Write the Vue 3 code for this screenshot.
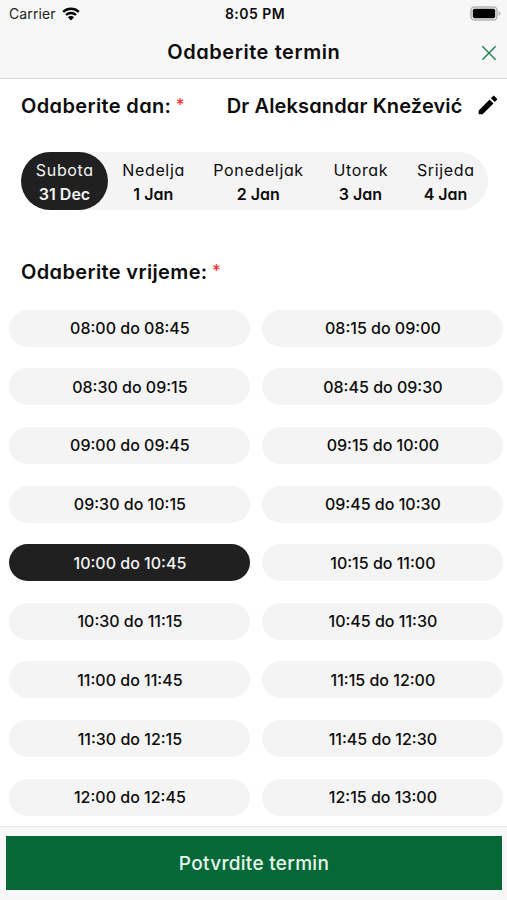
<script setup>
import { ref } from 'vue'

const days = [
  { name: 'Subota', date: '31 Dec' },
  { name: 'Nedelja', date: '1 Jan' },
  { name: 'Ponedeljak', date: '2 Jan' },
  { name: 'Utorak', date: '3 Jan' },
  { name: 'Srijeda', date: '4 Jan' },
]
const slots = [
  '08:00 do 08:45', '08:15 do 09:00',
  '08:30 do 09:15', '08:45 do 09:30',
  '09:00 do 09:45', '09:15 do 10:00',
  '09:30 do 10:15', '09:45 do 10:30',
  '10:00 do 10:45', '10:15 do 11:00',
  '10:30 do 11:15', '10:45 do 11:30',
  '11:00 do 11:45', '11:15 do 12:00',
  '11:30 do 12:15', '11:45 do 12:30',
  '12:00 do 12:45', '12:15 do 13:00',
]
const selectedDay = ref(0)
const selectedSlot = ref(8)
</script>

<template>
  <div class="screen">
    <header class="top">
      <div class="status">
        <div class="carrier">
          <span>Carrier</span>
          <svg class="wifi" width="18" height="14" viewBox="0 0 18 14">
            <path d="M1.2 4.9a11.2 11.2 0 0 1 15.6 0M4 8a7.2 7.2 0 0 1 10 0" fill="none" stroke="#000" stroke-width="2.3" />
            <path d="M9 13.5 5.9 10.3a4.4 4.4 0 0 1 6.2 0Z" fill="#000" />
          </svg>
        </div>
        <span class="clock">8:05 PM</span>
        <svg class="battery" width="31" height="15" viewBox="0 0 31 15">
          <rect x="1" y="1" width="26" height="13" rx="3.6" fill="#f7f7f7" stroke="#b4b4b4" stroke-width="1.6" />
          <rect x="2.8" y="2.7" width="22.4" height="9.6" rx="1.8" fill="#000" />
          <path d="M28.7 5v5q1.7-.7 1.7-2.5T28.7 5Z" fill="#b4b4b4" />
        </svg>
      </div>
      <div class="titlebar">
        <h1>Odaberite termin</h1>
        <button class="close" aria-label="Zatvori">
          <svg width="16" height="16" viewBox="0 0 16 16"><path d="m1.3 1.3 13.4 13.4m0-13.4L1.3 14.7" stroke="#217d50" stroke-width="1.35" /></svg>
        </button>
      </div>
    </header>

    <main>
      <div class="row">
        <h2 class="pick-day">Odaberite dan: <span class="req">*</span></h2>
        <div class="doctor">
          <h2 class="name">Dr Aleksandar Knežević</h2>
          <svg class="pencil" width="20" height="20" viewBox="0 0 20 20">
            <path d="M.7 15.4v3.9h3.9L15.5 8.4l-3.9-3.9ZM18.8 5.1c.5-.5.5-1.1 0-1.6l-2.3-2.3c-.5-.5-1.1-.5-1.6 0l-2 2 3.9 3.9Z" fill="#000" />
          </svg>
        </div>
      </div>

      <div class="days">
        <button v-for="(d, i) in days" :key="d.name" class="day" :class="{ active: i === selectedDay }" @click="selectedDay = i">
          <span>{{ d.name }}</span>
          <strong>{{ d.date }}</strong>
        </button>
      </div>

      <h2 class="pick-time">Odaberite vrijeme: <span class="req">*</span></h2>

      <div class="slots">
        <button v-for="(s, i) in slots" :key="s" class="slot" :class="{ active: i === selectedSlot }" @click="selectedSlot = i">{{ s }}</button>
      </div>
    </main>

    <footer><button class="confirm">Potvrdite termin</button></footer>
  </div>
</template>

<style>
body { margin: 0; background: #fff; overflow: hidden; }
</style>

<style scoped>
.screen {
  width: 507px;
  height: 900px;
  display: flex;
  flex-direction: column;
  overflow: hidden;
  background: #fff;
  color: #0c0c0c;
  font-family: Inter, "Open Sans", sans-serif;
  font-feature-settings: "cv11" 1;
}
button {
  border: 0;
  padding: 0;
  background: none;
  color: inherit;
  font: inherit;
  font-feature-settings: inherit;
  letter-spacing: inherit;
}
h1, h2 { margin: 0; font-weight: 600; white-space: nowrap; }
svg { display: block; flex: none; }
.top {
  box-sizing: border-box;
  flex: none;
  height: 79px;
  background: #f7f7f7;
  border-bottom: 1px solid #d9d9d9;
}
.status {
  height: 27px;
  display: grid;
  grid-template-columns: 1fr auto 1fr;
  align-items: center;
  padding: 0 6px 0 9px;
  font-feature-settings: normal;
  font-size: 14px;
}
.carrier { display: flex; align-items: center; gap: 6px; color: #222; }
.carrier span { letter-spacing: 0.1px; }
.clock { font-weight: 600; letter-spacing: 0.45px; }
.battery { justify-self: end; }
.titlebar {
  height: 51px;
  display: grid;
  grid-template-columns: 1fr auto 1fr;
  align-items: center;
  padding: 0 10.5px;
}
h1 { grid-column: 2; font-size: 20px; line-height: 24px; padding-bottom: 2px; letter-spacing: 0.57px; margin-right: -0.57px; }
.close { justify-self: end; }
main { flex: 1; min-height: 0; display: flex; flex-direction: column; }
.row {
  height: 54px;
  display: flex;
  align-items: center;
  justify-content: space-between;
  padding: 0 9px 0 21px;
}
h2 { font-size: 20px; line-height: 26px; letter-spacing: 0.36px; }
.name { letter-spacing: 0.13px; }
.pencil { margin-bottom: 2.5px; }
.req { color: #f8373a; font-size: 17px; line-height: 1; font-weight: 500; vertical-align: 2px; margin-left: -1px; }
.doctor { display: flex; align-items: center; gap: 15.5px; }
.days {
  flex: none;
  margin: 19px 19px 0 21px;
  height: 58px;
  display: grid;
  grid-template-columns: 87px 90.5px 119.5px 85px 85px;
  background: #f4f4f4;
  border-radius: 29px;
}
.day {
  display: flex;
  flex-direction: column;
  align-items: center;
  justify-content: center;
  border-radius: 29px;
  padding-top: 1px;
  font-size: 16px;
  line-height: 24px;
}
.day span { letter-spacing: 0.65px; margin-right: -0.65px; }
.day strong { font-weight: 600; }
.active { background: #202020; color: #f4f4f4; }
.pick-time { margin: 49px 0 0 21px; }
.slots {
  display: grid;
  grid-template-columns: 241px 241px;
  grid-auto-rows: 37px;
  gap: 21.65px 12px;
  margin: 24.6px 0 0 9.4px;
}
.slot { border-radius: 19px; font-size: 16px; font-weight: 500; }
.slot:not(.active) { background: #f4f4f4; }
footer {
  box-sizing: border-box;
  flex: none;
  height: 74px;
  padding: 9px 5px 10px 6px;
  border-top: 1px solid #e6e6e6;
  background: #f7f7f7;
}
.confirm {
  width: 100%;
  height: 54px;
  background: #046937;
  color: #e8f5ec;
  font-size: 19px;
  font-weight: 500;
  letter-spacing: 0.3px;
}
</style>
